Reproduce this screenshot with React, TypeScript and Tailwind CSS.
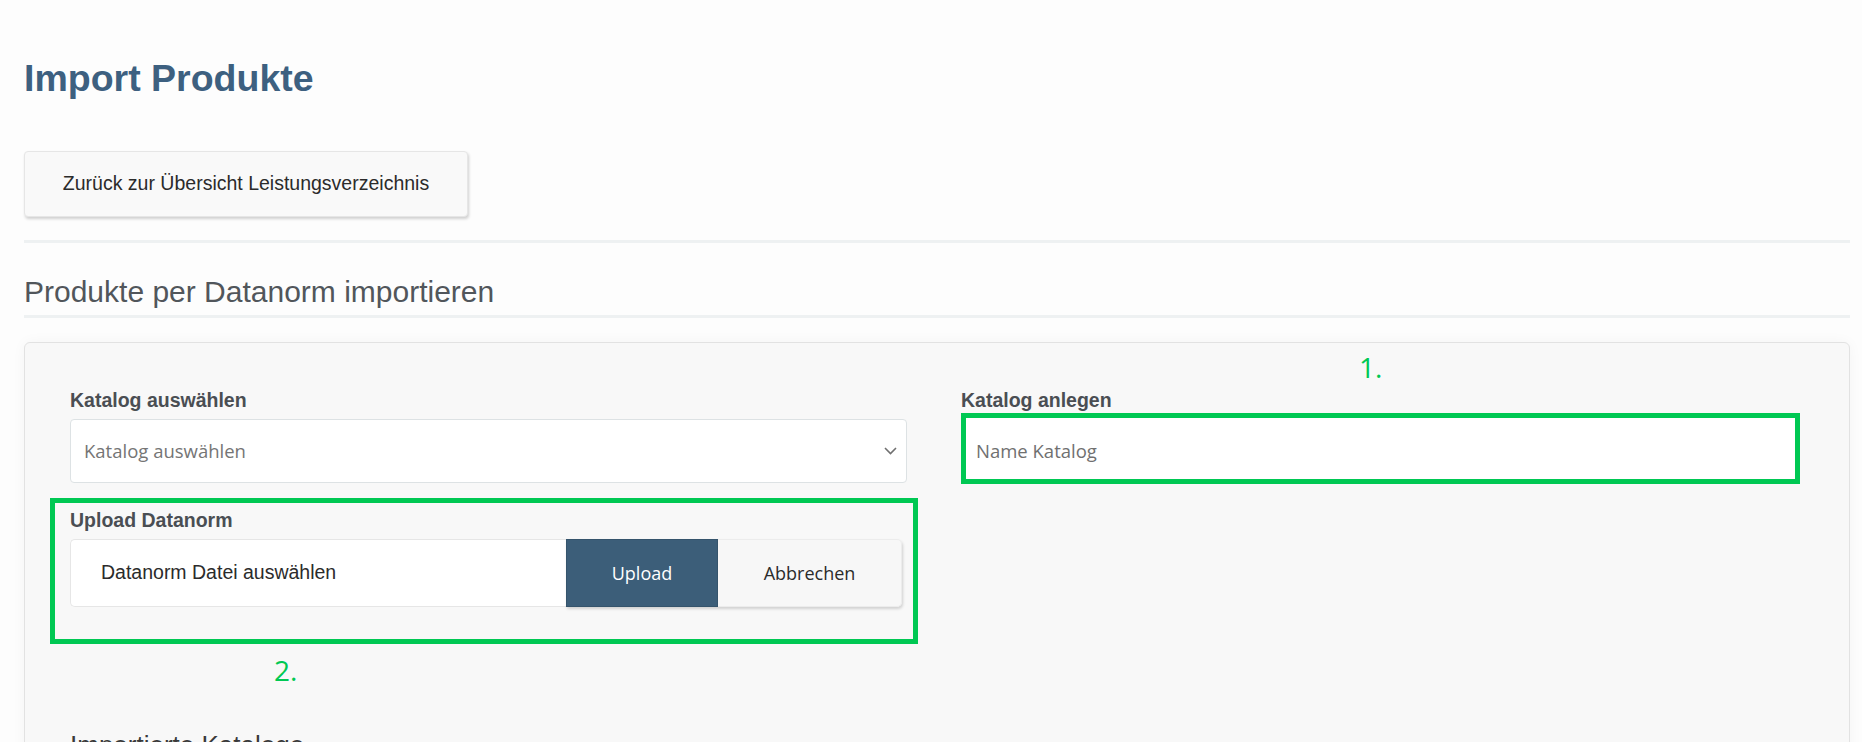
function ChevronDown() {
  return (
    <svg width="13" height="8" viewBox="0 0 13 8" fill="none">
      <polyline points="1,1 6.5,6.5 12,1" stroke="#707070" strokeWidth="1.6" />
    </svg>
  );
}

export default function App() {
  return (
    <div className="min-h-screen bg-[#fdfdfd] pl-[24px] pr-[12px] pt-[60px] font-['Liberation_Sans',Arial,sans-serif]">
      {/* Page title */}
      <h1 className="text-[37.5px] font-bold leading-[37px] text-[#3d6080]">Import Produkte</h1>

      {/* Back button */}
      <button className="mt-[54px] flex h-[66px] w-[444px] items-center justify-center rounded-[4px] border border-[#e6e6e6] bg-[#f9f9f9] text-[19.5px] text-[#2b2b2b] shadow-[1px_2px_3px_rgba(0,0,0,0.18)]">
        Zurück zur Übersicht Leistungsverzeichnis
      </button>

      <div className="mt-[23px] h-[3px] bg-[#eef1f2]" />

      {/* Section heading */}
      <h2 className="mt-[34px] text-[30px] leading-[30px] text-[#51565b]">Produkte per Datanorm importieren</h2>
      <div className="mt-[8px] h-[3px] bg-[#eef1f2]" />

      {/* Card */}
      <div className="mt-[24px] rounded-[6px] border border-[#e2e2e2] bg-[#f8f8f8] pb-[80px] pl-[45px] pr-[48px] pt-[48px] shadow-[0_0_14px_rgba(0,0,0,0.04)]">
        <div className="grid grid-cols-[837px_839px] gap-x-[54px]">
          {/* Left column */}
          <div>
            <label className="block text-[19.5px] font-bold leading-[19px] text-[#4a4e53]">Katalog auswählen</label>
            <div className="mt-[9px] flex h-[64px] items-center justify-between rounded-[4px] border border-[#dde2e4] bg-white pl-[13px] pr-[9px]">
              <span className="font-['Open_Sans',sans-serif] text-[18.5px] text-[#757575]">Katalog auswählen</span>
              <ChevronDown />
            </div>

            {/* Upload (annotated 2.) */}
            <div className="-ml-[20px] -mr-[11px] mt-[15px] border-[5px] border-[#00c853] pb-[32px] pl-[15px] pr-[11px] pt-[8px]">
              <label className="block text-[19.5px] font-bold leading-[19px] text-[#4a4e53]">Upload Datanorm</label>
              <div className="mt-[9px] flex h-[68px]">
                <div className="flex flex-1 items-center rounded-l-[5px] border border-r-0 border-[#e6e6e6] bg-white pl-[30px] text-[19.5px] text-[#2b2b2b]">
                  Datanorm Datei auswählen
                </div>
                <div className="flex rounded-r-[5px] shadow-[1px_2px_3px_rgba(0,0,0,0.16)]">
                  <button className="flex w-[152px] items-center justify-center border border-[#35546c] bg-[#3c5e79] font-['Open_Sans',sans-serif] text-[18px] text-white">
                    Upload
                  </button>
                  <button className="flex w-[184px] items-center justify-center rounded-r-[5px] border border-l-0 border-[#ececec] bg-[#f7f7f7] font-['Open_Sans',sans-serif] text-[18px] text-[#2b2b2b]">
                    Abbrechen
                  </button>
                </div>
              </div>
            </div>
            <div className="ml-[204px] mt-[12px] font-['Open_Sans',sans-serif] text-[28px] leading-[28px] text-[#00c853]">2.</div>
          </div>

          {/* Right column */}
          <div className="relative">
            <span className="absolute -top-[38px] left-[398px] font-['Open_Sans',sans-serif] text-[28px] leading-[28px] text-[#00c853]">1.</span>
            <label className="block text-[19.5px] font-bold leading-[19px] text-[#4a4e53]">Katalog anlegen</label>
            <div className="mt-[3px] flex h-[71px] items-center border-[5px] border-[#00c853] bg-white pl-[10px] pt-[4px]">
              <span className="font-['Open_Sans',sans-serif] text-[18.5px] text-[#707070]">Name Katalog</span>
            </div>
          </div>
        </div>

        <h3 className="mt-[48px] text-[26px] leading-[26px] text-[#3a3a3a]">Importierte Kataloge</h3>
      </div>
    </div>
  );
}
